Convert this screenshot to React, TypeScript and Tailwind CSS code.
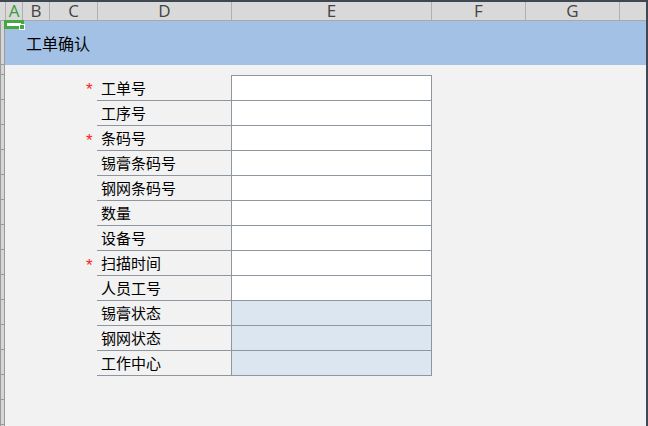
import React from 'react';

const cols = [
  { key: 'A', w: 'w-[17px]', active: true },
  { key: 'B', w: 'w-[27px]' },
  { key: 'C', w: 'w-[48px]' },
  { key: 'D', w: 'w-[134px]' },
  { key: 'E', w: 'w-[200px]' },
  { key: 'F', w: 'w-[94px]' },
  { key: 'G', w: 'w-[94px]' },
  { key: '', w: 'flex-1' },
];

const fields = [
  { label: '工单号', required: true },
  { label: '工序号' },
  { label: '条码号', required: true },
  { label: '锡膏条码号' },
  { label: '钢网条码号' },
  { label: '数量' },
  { label: '设备号' },
  { label: '扫描时间', required: true },
  { label: '人员工号' },
  { label: '锡膏状态', readOnly: true },
  { label: '钢网状态', readOnly: true },
  { label: '工作中心', readOnly: true },
];

const cjk = "font-['Noto_Sans_CJK_SC','Noto_Sans',sans-serif]";

export default function App() {
  return (
    <div className="relative w-[648px] h-[426px] overflow-hidden bg-[#f2f2f2] border-t-2 border-r-2 border-[#3e4752] flex flex-col">
      {/* column letters */}
      <div className="flex h-[19px] bg-[#d9d9d9] border-b border-[#a8a8a8] font-['Open_Sans','Noto_Sans',sans-serif] text-[17px] leading-[18px] text-[#444]">
        <div className="w-[5px]" />
        {cols.map((c, i) => (
          <div
            key={i}
            className={`${c.w} border-l border-[#b0b0b0] flex justify-center items-start ${c.active ? 'text-[#3c9a3c]' : ''}`}
          >
            {c.key}
          </div>
        ))}
      </div>

      <div className="flex flex-1">
        {/* row header strip */}
        <div className="w-[5px] bg-[#d6d6d6] border-l border-r border-[#9a9a9a] flex flex-col">
          <div className="h-[44px] border-b border-[#9a9a9a]" />
          <div className="h-[10px] border-b border-[#9a9a9a]" />
          {Array.from({ length: 14 }).map((_, i) => (
            <div key={i} className="h-[25px] shrink-0 border-b border-[#9a9a9a]" />
          ))}
        </div>

        <div className="flex-1 flex flex-col">
          <div className={`h-[44px] bg-[#a3c1e5] flex items-center pl-[21px] text-[16px] text-black ${cjk}`}>
            工单确认
          </div>

          {/* form grid */}
          <div className={`mt-[10px] ml-[81px] grid grid-cols-[11px_134px_201px] ${cjk}`}>
            {fields.map((f, i) => (
              <React.Fragment key={f.label}>
                <div className="text-[#ff2020] font-['Liberation_Sans',sans-serif] text-[17px] leading-[20px] pt-[5px]">
                  {f.required ? '*' : ''}
                </div>
                <div
                  className={`border-b border-[#8e979f] pl-[4px] flex items-center text-[15px] text-black ${i === 0 ? 'h-[26px] pt-[1px]' : 'h-[25px]'}`}
                >
                  {f.label}
                </div>
                <div
                  className={`border-x border-b border-[#8e979f] ${i === 0 ? 'border-t h-[26px]' : 'h-[25px]'} ${f.readOnly ? 'bg-[#dce6f0]' : 'bg-white'}`}
                />
              </React.Fragment>
            ))}
          </div>
        </div>
      </div>

      {/* active cell marker */}
      <div className="absolute left-[4px] top-[18px] w-[20px] h-[9px] border-[3px] border-[#45a845] bg-white" />
      <div className="absolute left-[19px] top-[22px] w-[6px] h-[6px] bg-[#45a845] border border-white" />
    </div>
  );
}
